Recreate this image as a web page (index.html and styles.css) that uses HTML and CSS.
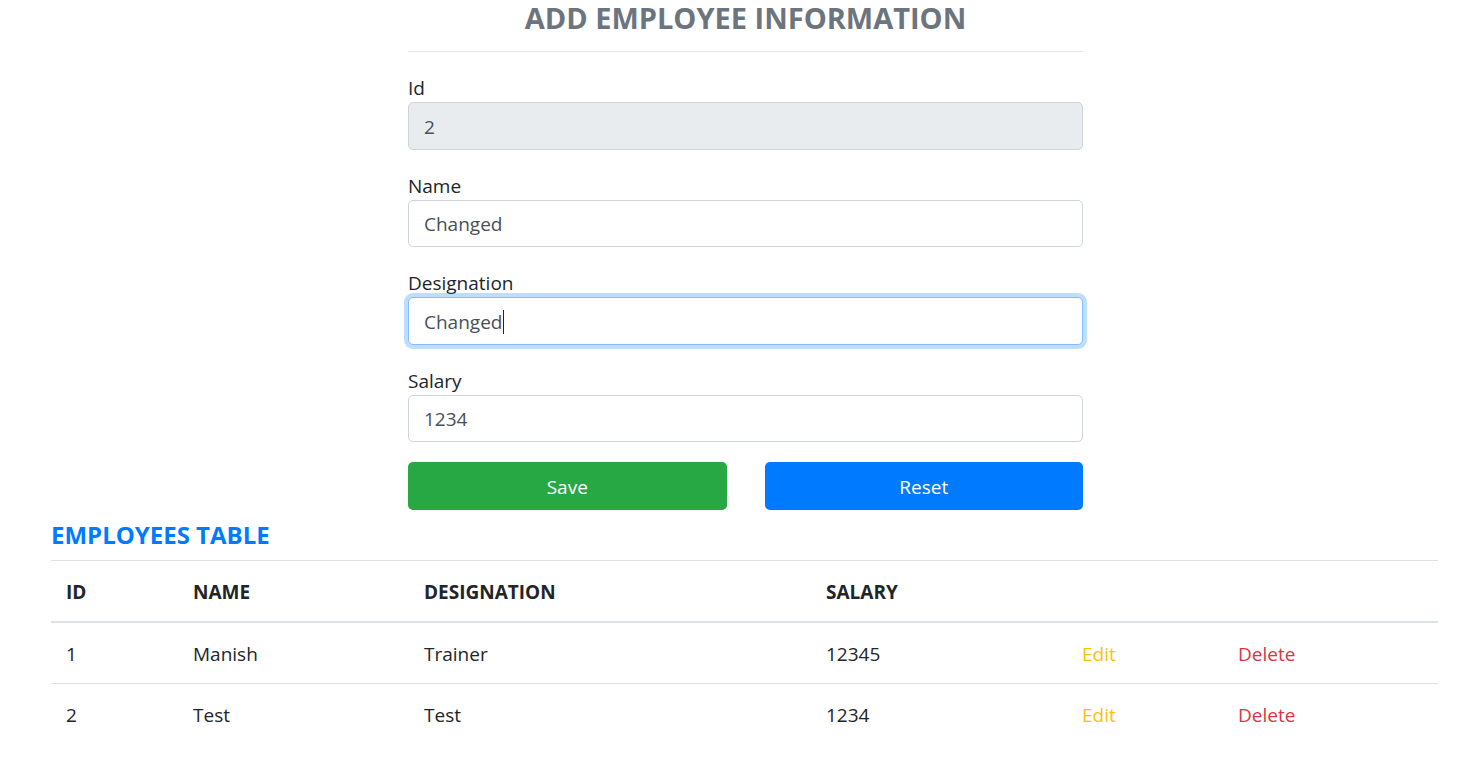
FILE: index.html
```html
<!DOCTYPE html>
<html lang="en">
<head>
<meta charset="utf-8">
<title>Employees</title>
<link rel="stylesheet" href="styles.css">
</head>
<body>
<div class="page">
  <div class="form-wrap">
    <h4 class="title">ADD EMPLOYEE INFORMATION</h4>
    <hr class="rule">
    <form class="emp-form">
      <div class="form-group">
        <label class="lbl" for="id">Id</label>
        <input class="form-control" id="id" type="text" value="2" disabled>
      </div>
      <div class="form-group">
        <label class="lbl" for="name">Name</label>
        <input class="form-control" id="name" type="text" value="Changed">
      </div>
      <div class="form-group">
        <label class="lbl" for="desig">Designation</label>
        <div class="field-wrap">
          <input class="form-control focused" id="desig" type="text" value="Changed">
          <span class="caret"></span>
        </div>
      </div>
      <div class="form-group">
        <label class="lbl" for="salary">Salary</label>
        <input class="form-control" id="salary" type="text" value="1234">
      </div>
      <div class="btn-row">
        <button type="button" class="btn btn-success">Save</button>
        <button type="button" class="btn btn-primary">Reset</button>
      </div>
    </form>
  </div>
  <h5 class="table-title">EMPLOYEES TABLE</h5>
  <table class="table">
    <thead>
      <tr>
        <th class="c-id">ID</th>
        <th class="c-name">NAME</th>
        <th class="c-desig">DESIGNATION</th>
        <th class="c-sal">SALARY</th>
        <th class="c-edit"></th>
        <th class="c-del"></th>
      </tr>
    </thead>
    <tbody>
      <tr>
        <td>1</td>
        <td>Manish</td>
        <td>Trainer</td>
        <td>12345</td>
        <td class="edit">Edit</td>
        <td class="del">Delete</td>
      </tr>
      <tr>
        <td>2</td>
        <td>Test</td>
        <td>Test</td>
        <td>1234</td>
        <td class="edit">Edit</td>
        <td class="del">Delete</td>
      </tr>
    </tbody>
  </table>
</div>
</body>
</html>
```
FILE: styles.css
```css
* { box-sizing: border-box; }
html, body { margin: 0; padding: 0; background: #fff; }
body {
  font-family: "Open Sans", "Noto Sans", sans-serif;
  font-size: 19px;
  line-height: 30px;
  color: #212529;
}
.page { padding: 0 29px 0 51px; }
.form-wrap { width: 675px; margin-left: 357px; }
.title {
  margin: 0;
  font-size: 29px;
  line-height: 36px;
  font-weight: 700;
  color: #6c757d;
  text-align: center;
}
.rule {
  margin: 15px 0 20px;
  border: 0;
  border-top: 1px solid rgba(0,0,0,0.1);
  height: 0;
}
.emp-form { margin: 0; }
.form-group { margin-bottom: 20px; }
.lbl { display: block; line-height: 28px; padding-top: 2px; margin: 0; }
.field-wrap { position: relative; }
.form-control {
  display: block;
  width: 100%;
  height: 47.5px;
  padding: 2px 15px 0;
  font-family: inherit;
  font-size: 19px;
  color: #495057;
  background: #fff;
  border: 1px solid #ced4da;
  border-radius: 5px;
  outline: none;
}
.form-control:disabled { background: #e9ecef; color: #495057; opacity: 1; }
.form-control.focused {
  border-color: #80bdff;
  box-shadow: 0 0 0 4px rgba(0,123,255,0.25);
}
.caret {
  position: absolute;
  left: 95px;
  top: 13px;
  width: 1px;
  height: 24px;
  background: #212529;
}
.btn-row { display: flex; gap: 38px; }
.btn {
  flex: 1;
  height: 47.5px;
  padding: 2px 0 0;
  border: 0;
  border-radius: 5px;
  color: #fff;
  font-family: inherit;
  font-size: 19px;
  cursor: pointer;
}
.btn-success { background: #28a745; }
.btn-primary { background: #007bff; }
.table-title {
  margin: 10px 0 10px 0;
  font-size: 24px;
  line-height: 30px;
  font-weight: 700;
  color: #007bff;
}
.table { width: 100%; border-collapse: collapse; }
.table th, .table td {
  padding: 16px 15px 14px 15px;
  text-align: left;
  vertical-align: top;
  border-top: 1px solid #dee2e6;
  line-height: 30px;
}
.table th { font-weight: 700; border-bottom: 2px solid #dee2e6; }
.c-id { width: 127px; }
.c-name { width: 231px; }
.c-desig { width: 402px; }
.c-sal { width: 256px; }
.c-edit { width: 156px; }
.edit { color: #ffc107; }
.del { color: #dc3545; }
```
